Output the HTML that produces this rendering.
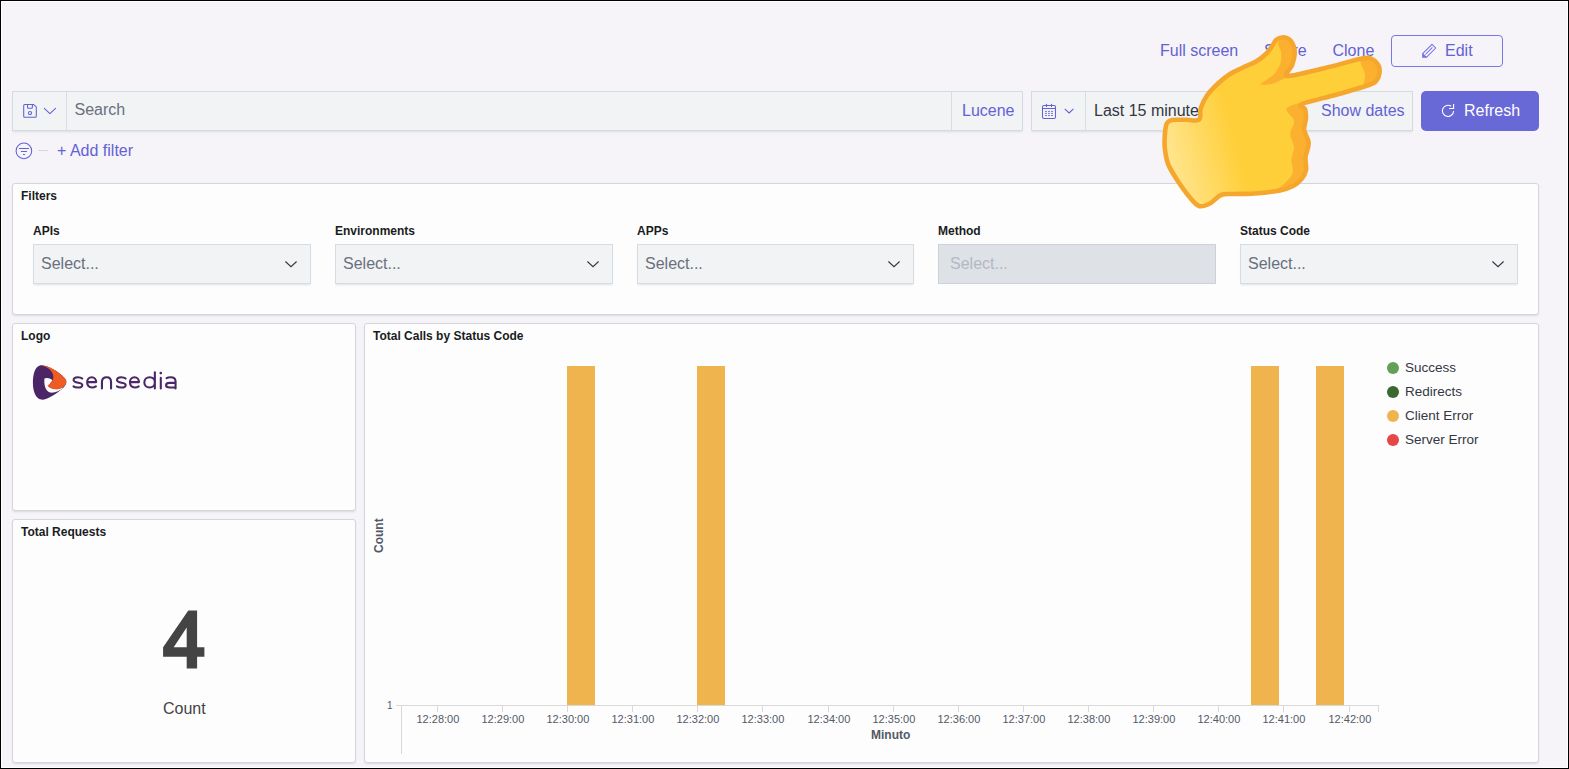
<!DOCTYPE html>
<html><head><meta charset="utf-8">
<style>
html,body{margin:0;padding:0;}
body{width:1569px;height:769px;overflow:hidden;position:relative;background:#000;font-family:"Liberation Sans",sans-serif;}
#frame{position:absolute;left:1px;top:1px;width:1567px;height:767px;background:#fff;}
#page{position:absolute;left:2px;top:2px;width:1565px;height:765px;background:#f6f4f8;}
.a{position:absolute;}
.t{position:absolute;line-height:normal;white-space:nowrap;}
.lnk{color:#6262d4;font-size:16px;}
.field{position:absolute;background:#f1f3f5;box-shadow:inset 0 0 0 1px #d3dce1,0 2px 2px -1px rgba(152,162,179,.3);}
.panel{position:absolute;background:#fdfdfe;border:1px solid #d3d7dc;border-radius:3px;box-shadow:0 1px 2px rgba(0,0,0,.07),0 2px 3px -1px rgba(0,0,0,.05);box-sizing:border-box;}
.ptitle{font-weight:bold;font-size:12px;color:#1a1c21;}
.lbl{font-weight:bold;font-size:12px;color:#1a1c21;}
.sel{position:absolute;top:244px;height:40px;width:278px;background:#f2f3f5;box-shadow:inset 0 0 0 1px #d5dde2,0 2px 2px -1px rgba(152,162,179,.3);box-sizing:border-box;}
.sel .ph{position:absolute;left:8px;top:11px;font-size:16px;color:#69707d;line-height:normal;}
.sel svg{position:absolute;right:13px;top:16px;}
.tick{font-size:11px;color:#535966;}
.leg{font-size:13.5px;color:#343741;}
.dot{position:absolute;width:12px;height:12px;border-radius:50%;}
.bar{position:absolute;background:#efb44d;}
</style></head>
<body>
<div id="frame"></div>
<div id="page"></div>

<!-- top nav -->
<div class="t lnk" style="left:1160px;top:42px;">Full screen</div>
<div class="t lnk" style="left:1264px;top:42px;">Share</div>
<div class="t lnk" style="left:1332.5px;top:42px;">Clone</div>
<div class="a" style="left:1391px;top:35px;width:112px;height:32px;box-sizing:border-box;border:1px solid #7777e6;border-radius:4px;"></div>
<div class="t lnk" style="left:1445px;top:42px;">Edit</div>

<!-- search bar -->
<div class="field" style="left:12px;top:91px;width:1011px;height:40px;"></div>
<div class="a" style="left:66px;top:92px;width:1px;height:38px;background:#d6dee3;"></div>
<div class="a" style="left:951px;top:92px;width:1px;height:38px;background:#d6dee3;"></div>
<div class="t" style="left:74.5px;top:101px;font-size:16px;color:#69707d;">Search</div>
<div class="t lnk" style="left:962px;top:102px;">Lucene</div>

<!-- date picker -->
<div class="field" style="left:1031px;top:91px;width:382px;height:40px;"></div>
<div class="a" style="left:1085px;top:92px;width:1px;height:38px;background:#d6dee3;"></div>
<div class="t" style="left:1094px;top:102px;font-size:16px;color:#343741;">Last 15 minutes</div>
<div class="t lnk" style="left:1321px;top:102px;">Show dates</div>

<!-- refresh -->
<div class="a" style="left:1421px;top:91px;width:118px;height:40px;background:#6868d6;border-radius:5px;"></div>
<div class="t" style="left:1464px;top:102px;font-size:16px;color:#fff;">Refresh</div>

<!-- add filter row -->
<div class="t lnk" style="left:57px;top:142px;">+ Add filter</div>

<!-- Filters panel -->
<div class="panel" style="left:12px;top:183px;width:1527px;height:132px;"></div>
<div class="t ptitle" style="left:21px;top:189px;">Filters</div>
<div class="t lbl" style="left:33px;top:224px;">APIs</div>
<div class="t lbl" style="left:335px;top:224px;">Environments</div>
<div class="t lbl" style="left:637px;top:224px;">APPs</div>
<div class="t lbl" style="left:938px;top:224px;">Method</div>
<div class="t lbl" style="left:1240px;top:224px;">Status Code</div>
<div class="sel" style="left:33px;"><div class="ph">Select...</div><svg width="14" height="9" viewBox="0 0 14 9"><path d="M1.4 1.5L7 6.7L12.6 1.5" fill="none" stroke="#343741" stroke-width="1.15"/></svg></div>
<div class="sel" style="left:335px;"><div class="ph">Select...</div><svg width="14" height="9" viewBox="0 0 14 9"><path d="M1.4 1.5L7 6.7L12.6 1.5" fill="none" stroke="#343741" stroke-width="1.15"/></svg></div>
<div class="sel" style="left:637px;width:277px;"><div class="ph">Select...</div><svg width="14" height="9" viewBox="0 0 14 9"><path d="M1.4 1.5L7 6.7L12.6 1.5" fill="none" stroke="#343741" stroke-width="1.15"/></svg></div>
<div class="sel" style="left:938px;background:#dee1e5;box-shadow:inset 0 0 0 1px #cad2d8;"><div class="ph" style="left:12px;color:#b3b9c1;">Select...</div></div>
<div class="sel" style="left:1240px;"><div class="ph">Select...</div><svg width="14" height="9" viewBox="0 0 14 9"><path d="M1.4 1.5L7 6.7L12.6 1.5" fill="none" stroke="#343741" stroke-width="1.15"/></svg></div>

<!-- Logo panel -->
<div class="panel" style="left:12px;top:323px;width:344px;height:188px;"></div>
<div class="t ptitle" style="left:21px;top:329px;">Logo</div>
<svg class="a" style="left:0;top:0;" width="200" height="420" viewBox="0 0 200 420">
<path d="M39.4 365.7C35 367.2 32.9 374 32.9 383C33 392 35.8 398.3 41.2 399.6C46 400.4 56 394.5 63.5 387.5C66.2 385 67 382 65.8 379.5C62 374 52 367 42.9 365.4C41.6 365.2 40.4 365.3 39.4 365.7Z" fill="#4b2566"/>
<path d="M44.4 378.6C46.5 377.6 50 378 52.5 380.2L48.2 386.2C51 389 56.5 390 63.2 387.6C60 391.2 55 393 50.2 392.6C46.3 391.7 43.8 386.5 44.4 378.6Z" fill="#fdfdff"/>
<path d="M41.3 365.3C48 365.5 58.5 371 65.6 379.3C67 381.2 66.6 384.3 62.8 387.6C58.5 390.2 52 390.4 47.5 385.6C51.2 383.2 53.6 380 53.3 376.5C53 371.2 48.2 367.2 41.3 365.3Z" fill="#ef5b22"/>
<g fill="none" stroke="#4a2766" stroke-width="2.1" stroke-linecap="round" stroke-linejoin="round">
<path transform="translate(0 0)" d="M82.2 378.6C81.2 377.6 79.6 377.25 77.9 377.25C75.2 377.25 73.6 378.4 73.6 380C73.6 383.8 82.3 381.6 82.3 384.9C82.3 386.6 80.6 387.45 77.9 387.45C75.9 387.45 74.4 387 73.5 386.3"/><path transform="translate(0 0)" d="M87.2 382.1H96.2C96.2 379.3 94.3 377.25 91.7 377.25C89 377.25 87.15 379.5 87.15 382.35C87.15 385.3 89 387.45 91.9 387.45C93.5 387.45 94.9 387.1 95.9 386.4"/>
<path d="M101.95 388.4V382C101.95 379 104 377.25 106.7 377.25C109.5 377.25 111.05 379 111.05 382V388.4"/>
<path transform="translate(43.4 0)" d="M82.2 378.6C81.2 377.6 79.6 377.25 77.9 377.25C75.2 377.25 73.6 378.4 73.6 380C73.6 383.8 82.3 381.6 82.3 384.9C82.3 386.6 80.6 387.45 77.9 387.45C75.9 387.45 74.4 387 73.5 386.3"/><path transform="translate(42.8 0)" d="M87.2 382.1H96.2C96.2 379.3 94.3 377.25 91.7 377.25C89 377.25 87.15 379.5 87.15 382.35C87.15 385.3 89 387.45 91.9 387.45C93.5 387.45 94.9 387.1 95.9 386.4"/>
<path d="M154.85 372.3V388.4M154.85 382.4C154.85 379.2 152.6 377.25 149.6 377.25C146.5 377.25 144.35 379.6 144.35 382.4C144.35 385.3 146.5 387.45 149.6 387.45C152.6 387.45 154.85 385.4 154.85 382.4"/>
<path d="M160.8 377.8V388.4"/>
<path d="M166.6 378.2C167.6 377.5 169 377.25 170.6 377.25C174 377.25 175.55 378.8 175.55 381.4V388.4M175.55 382.9H170C167.4 382.9 166.05 384.2 166.05 385.3C166.05 386.8 167.3 387.45 169.6 387.45H175.55"/>
</g>
<circle cx="160.8" cy="373.1" r="1.35" fill="#4a2766"/>
</svg>

<!-- Total Requests panel -->
<div class="panel" style="left:12px;top:519px;width:344px;height:244px;"></div>
<div class="t ptitle" style="left:21px;top:525px;">Total Requests</div>
<svg class="a" style="left:0;top:0;" width="260" height="700" viewBox="0 0 260 700"><path fill-rule="evenodd" fill="#444" d="M188.3 610.4H197.1V647.3H204.4V656.7H197.1V668.6H186.7V656.7H163.1V647.3ZM186.7 627.6L173.7 647.3H186.7Z"/></svg>
<div class="t" style="left:163px;top:700px;font-size:16px;color:#444;">Count</div>

<!-- Chart panel -->
<div class="panel" style="left:364px;top:323px;width:1175px;height:440px;"></div>
<div class="t ptitle" style="left:373px;top:329px;">Total Calls by Status Code</div>

<div class="bar" style="left:567px;top:366px;width:28px;height:339px;"></div>
<div class="bar" style="left:697px;top:366px;width:28px;height:339px;"></div>
<div class="bar" style="left:1251px;top:366px;width:28px;height:339px;"></div>
<div class="bar" style="left:1316px;top:366px;width:28px;height:339px;"></div>

<div class="a" style="left:396px;top:705px;width:983px;height:1px;background:#d9d9d9;"></div>
<div class="a" style="left:401px;top:705px;width:1px;height:49px;background:#d9d9d9;"></div>
<div class="a" style="left:437px;top:705px;width:1px;height:7px;background:#d9d9d9;"></div><div class="t tick" style="left:416.5px;top:713px;width:42px;text-align:center;">12:28:00</div>
<div class="a" style="left:502px;top:705px;width:1px;height:7px;background:#d9d9d9;"></div><div class="t tick" style="left:481.5px;top:713px;width:42px;text-align:center;">12:29:00</div>
<div class="a" style="left:567px;top:705px;width:1px;height:7px;background:#d9d9d9;"></div><div class="t tick" style="left:546.5px;top:713px;width:42px;text-align:center;">12:30:00</div>
<div class="a" style="left:632px;top:705px;width:1px;height:7px;background:#d9d9d9;"></div><div class="t tick" style="left:611.5px;top:713px;width:42px;text-align:center;">12:31:00</div>
<div class="a" style="left:697px;top:705px;width:1px;height:7px;background:#d9d9d9;"></div><div class="t tick" style="left:676.5px;top:713px;width:42px;text-align:center;">12:32:00</div>
<div class="a" style="left:762px;top:705px;width:1px;height:7px;background:#d9d9d9;"></div><div class="t tick" style="left:741.5px;top:713px;width:42px;text-align:center;">12:33:00</div>
<div class="a" style="left:828px;top:705px;width:1px;height:7px;background:#d9d9d9;"></div><div class="t tick" style="left:807.5px;top:713px;width:42px;text-align:center;">12:34:00</div>
<div class="a" style="left:893px;top:705px;width:1px;height:7px;background:#d9d9d9;"></div><div class="t tick" style="left:872.5px;top:713px;width:42px;text-align:center;">12:35:00</div>
<div class="a" style="left:958px;top:705px;width:1px;height:7px;background:#d9d9d9;"></div><div class="t tick" style="left:937.5px;top:713px;width:42px;text-align:center;">12:36:00</div>
<div class="a" style="left:1023px;top:705px;width:1px;height:7px;background:#d9d9d9;"></div><div class="t tick" style="left:1002.5px;top:713px;width:42px;text-align:center;">12:37:00</div>
<div class="a" style="left:1088px;top:705px;width:1px;height:7px;background:#d9d9d9;"></div><div class="t tick" style="left:1067.5px;top:713px;width:42px;text-align:center;">12:38:00</div>
<div class="a" style="left:1153px;top:705px;width:1px;height:7px;background:#d9d9d9;"></div><div class="t tick" style="left:1132.5px;top:713px;width:42px;text-align:center;">12:39:00</div>
<div class="a" style="left:1218px;top:705px;width:1px;height:7px;background:#d9d9d9;"></div><div class="t tick" style="left:1197.5px;top:713px;width:42px;text-align:center;">12:40:00</div>
<div class="a" style="left:1283px;top:705px;width:1px;height:7px;background:#d9d9d9;"></div><div class="t tick" style="left:1262.5px;top:713px;width:42px;text-align:center;">12:41:00</div>
<div class="a" style="left:1349px;top:705px;width:1px;height:7px;background:#d9d9d9;"></div><div class="t tick" style="left:1328.5px;top:713px;width:42px;text-align:center;">12:42:00</div>
<div class="a" style="left:1378px;top:705px;width:1px;height:7px;background:#d9d9d9;"></div>
<div class="t" style="left:387px;top:700px;font-size:10px;color:#535966;">1</div>
<div class="t" style="left:372px;top:553px;font-size:12px;font-weight:bold;color:#535966;transform:rotate(-90deg);transform-origin:0 0;">Count</div>
<div class="t" style="left:871px;top:728px;font-size:12px;font-weight:bold;color:#535966;">Minuto</div>

<div class="dot" style="left:1387px;top:362px;background:#62a055;"></div>
<div class="t leg" style="left:1405px;top:360px;">Success</div>
<div class="dot" style="left:1387px;top:386px;background:#39692f;"></div>
<div class="t leg" style="left:1405px;top:384px;">Redirects</div>
<div class="dot" style="left:1387px;top:410px;background:#efb44d;"></div>
<div class="t leg" style="left:1405px;top:408px;">Client Error</div>
<div class="dot" style="left:1387px;top:434px;background:#e64646;"></div>
<div class="t leg" style="left:1405px;top:432px;">Server Error</div>

<!-- ICONS -->
<svg class="a" style="left:0;top:0;" width="1569" height="769" viewBox="0 0 1569 769">
<g fill="none" stroke="#6262d4" stroke-width="1.05" stroke-linejoin="round" stroke-linecap="round">
<path d="M23.7 105.4a1 1 0 0 1 1-1H33.4L36.3 106.9V116.3a1 1 0 0 1-1 1H24.7a1 1 0 0 1-1-1z"/>
<path d="M27.5 104.4V107.3a1 1 0 0 0 1 1H31.4a1 1 0 0 0 1-1V104.4"/>
<circle cx="30" cy="113" r="1.6"/>
<path d="M44.3 108.3L49.9 113.6L55.6 108.3"/>
<rect x="1042.5" y="105.5" width="13" height="13" rx="1.5"/>
<path d="M1042.5 108.5H1055.5M1046.5 104.2V106.5M1051.5 104.2V106.5"/>
<path d="M1045.1 111.4h1.8M1048.1 111.4h1.8M1051.1 111.4h1.8M1045.1 113.4h1.8M1048.1 113.4h1.8M1051.1 113.4h1.8M1045.1 115.5h1.8M1048.1 115.5h1.8M1051.1 115.5h1.8" stroke-width="0.95" stroke-linecap="butt"/>
<path d="M1065 109.2L1069.1 113L1073.2 109.2"/>
<circle cx="23.9" cy="150.9" r="7.8"/>
<path d="M19.5 148.4H28.6M21.4 151.4H26.6M23.4 154.4H24.6"/>
</g>
<g fill="none" stroke="#6e6ee6" stroke-width="1.05" stroke-linejoin="round">
<path d="M1422.6 53.6L1432 44.3L1435.7 48L1426.4 57.3Z"/>
<path d="M1432.4 47.4L1425.4 54.5"/>
</g>
<path d="M1422.2 53.4V57.7H1426.6Z" fill="#6e6ee6"/>
<g fill="none" stroke="#fff" stroke-width="1.1">
<path d="M1451.3 106.3A5.6 5.6 0 1 0 1453.6 111"/>
<path d="M1453.6 104V108.5H1449.1"/>
</g>
<rect x="38" y="150" width="10" height="1" fill="#d3d9df"/>
</svg>
<!-- HAND -->
<svg class="a" style="left:1150px;top:30px;" width="250" height="185" viewBox="1150 30 250 185">
<defs><linearGradient id="hg" x1="1165" y1="180" x2="1240" y2="160" gradientUnits="userSpaceOnUse"><stop offset="0" stop-color="#ffe899"/><stop offset="1" stop-color="#ffcf3a"/></linearGradient></defs>
<path d="M1284.0 37.2C1286.2 37.3 1288.4 38.5 1290.0 40.0C1291.6 41.5 1293.0 44.0 1293.8 46.5C1294.6 49.0 1294.9 51.8 1294.6 55.0C1294.3 58.2 1293.2 62.0 1292.0 65.5C1290.8 69.0 1282.0 75.6 1287.5 76.0C1293.0 76.4 1312.6 70.9 1325.0 68.0C1337.4 65.1 1354.2 60.0 1362.0 58.5C1369.8 57.0 1369.2 57.8 1372.0 59.0C1374.8 60.2 1377.2 63.2 1378.5 65.5C1379.8 67.8 1379.8 70.5 1379.5 73.0C1379.2 75.5 1378.2 78.5 1376.5 80.5C1374.8 82.5 1375.6 82.7 1369.0 85.0C1362.4 87.3 1348.2 91.3 1337.0 94.5C1325.8 97.7 1307.3 101.6 1302.0 104.0C1296.7 106.4 1304.3 106.7 1305.0 109.0C1305.7 111.3 1306.1 114.5 1306.0 118.0C1305.9 121.5 1303.8 125.8 1304.2 130.0C1304.7 134.2 1308.5 138.5 1308.7 143.0C1308.9 147.5 1306.0 152.5 1305.5 157.0C1305.0 161.5 1306.7 166.3 1306.0 170.0C1305.3 173.7 1303.7 176.3 1301.5 179.0C1299.3 181.7 1296.6 184.1 1293.0 186.0C1289.4 187.9 1286.4 189.2 1280.0 190.5C1273.6 191.8 1262.2 192.9 1254.5 193.5C1246.8 194.1 1239.1 193.8 1233.5 194.0C1227.9 194.2 1224.9 193.4 1221.0 195.0C1217.1 196.6 1213.7 201.7 1210.0 203.5C1206.3 205.3 1202.4 207.1 1199.0 206.0C1195.6 204.9 1192.9 201.0 1189.5 197.0C1186.1 193.0 1182.0 187.3 1178.5 182.0C1175.0 176.7 1170.8 170.5 1168.5 165.0C1166.2 159.5 1165.5 154.2 1164.9 149.0C1164.3 143.8 1164.6 138.2 1164.9 134.0C1165.2 129.8 1165.6 125.8 1166.8 123.5C1168.0 121.2 1168.8 120.6 1172.0 120.0C1175.2 119.4 1181.5 119.9 1186.0 119.8C1190.5 119.7 1196.5 121.6 1199.0 119.6C1201.5 117.6 1199.5 112.0 1200.8 108.0C1202.1 104.0 1204.1 99.6 1207.0 95.5C1209.9 91.4 1214.2 87.1 1218.0 83.5C1221.8 79.9 1225.8 76.7 1230.0 74.0C1234.2 71.3 1238.7 69.6 1243.0 67.5C1247.3 65.4 1252.1 63.8 1256.0 61.5C1259.9 59.2 1263.8 56.2 1266.5 53.5C1269.2 50.8 1270.8 47.8 1272.5 45.5C1274.2 43.2 1274.6 40.9 1276.5 39.5C1278.4 38.1 1281.8 37.1 1284.0 37.2Z" fill="url(#hg)"/>
<path d="M1284.0 37.2C1286.0 36.7 1288.4 38.5 1290.0 40.0C1291.6 41.5 1293.0 44.0 1293.8 46.5C1294.6 49.0 1294.9 51.8 1294.6 55.0C1294.3 58.2 1293.2 62.0 1292.0 65.5C1290.8 69.0 1290.7 73.0 1287.5 76.0C1284.3 79.0 1277.5 82.1 1273.0 83.5C1268.5 84.9 1261.5 85.2 1260.5 84.5C1259.5 83.8 1264.6 81.4 1267.0 79.5C1269.4 77.6 1272.8 75.8 1275.0 73.0C1277.2 70.2 1279.5 66.5 1280.5 63.0C1281.5 59.5 1281.4 55.3 1281.0 52.0C1280.6 48.7 1277.5 45.5 1278.0 43.0C1278.5 40.5 1282.0 37.7 1284.0 37.2Z" fill="#fbb12f"/>
<path d="M1362.0 58.5C1363.8 57.7 1369.2 57.8 1372.0 59.0C1374.8 60.2 1377.2 63.2 1378.5 65.5C1379.8 67.8 1379.8 70.5 1379.5 73.0C1379.2 75.5 1378.2 78.5 1376.5 80.5C1374.8 82.5 1371.1 84.4 1369.0 85.0C1366.9 85.6 1364.7 85.8 1364.0 84.0C1363.3 82.2 1365.5 77.3 1365.0 74.0C1364.5 70.7 1361.5 66.6 1361.0 64.0C1360.5 61.4 1360.2 59.3 1362.0 58.5Z" fill="#fbb12f"/>
<path d="M1302.0 104.0C1303.5 104.8 1304.3 106.7 1305.0 109.0C1305.7 111.3 1306.1 114.5 1306.0 118.0C1305.9 121.5 1303.8 125.8 1304.2 130.0C1304.7 134.2 1308.5 138.5 1308.7 143.0C1308.9 147.5 1306.0 152.5 1305.5 157.0C1305.0 161.5 1306.7 166.3 1306.0 170.0C1305.3 173.7 1303.7 176.3 1301.5 179.0C1299.3 181.7 1296.6 184.1 1293.0 186.0C1289.4 187.9 1283.1 189.6 1280.0 190.5C1276.9 191.4 1273.7 192.8 1274.5 191.5C1275.3 190.2 1282.0 186.1 1285.0 183.0C1288.0 179.9 1291.6 176.8 1292.7 173.0C1293.8 169.2 1291.2 164.3 1291.4 160.0C1291.6 155.7 1294.2 151.3 1294.0 147.0C1293.8 142.7 1290.1 138.3 1290.1 134.0C1290.1 129.7 1294.7 125.1 1294.0 121.0C1293.3 116.9 1285.9 112.1 1286.2 109.3C1286.5 106.5 1293.4 104.9 1296.0 104.0C1298.6 103.1 1300.5 103.2 1302.0 104.0Z" fill="#fbb12f"/>
<path d="M1284.0 37.2C1286.2 37.3 1288.4 38.5 1290.0 40.0C1291.6 41.5 1293.0 44.0 1293.8 46.5C1294.6 49.0 1294.9 51.8 1294.6 55.0C1294.3 58.2 1293.2 62.0 1292.0 65.5C1290.8 69.0 1282.0 75.6 1287.5 76.0C1293.0 76.4 1312.6 70.9 1325.0 68.0C1337.4 65.1 1354.2 60.0 1362.0 58.5C1369.8 57.0 1369.2 57.8 1372.0 59.0C1374.8 60.2 1377.2 63.2 1378.5 65.5C1379.8 67.8 1379.8 70.5 1379.5 73.0C1379.2 75.5 1378.2 78.5 1376.5 80.5C1374.8 82.5 1375.6 82.7 1369.0 85.0C1362.4 87.3 1348.2 91.3 1337.0 94.5C1325.8 97.7 1307.3 101.6 1302.0 104.0C1296.7 106.4 1304.3 106.7 1305.0 109.0C1305.7 111.3 1306.1 114.5 1306.0 118.0C1305.9 121.5 1303.8 125.8 1304.2 130.0C1304.7 134.2 1308.5 138.5 1308.7 143.0C1308.9 147.5 1306.0 152.5 1305.5 157.0C1305.0 161.5 1306.7 166.3 1306.0 170.0C1305.3 173.7 1303.7 176.3 1301.5 179.0C1299.3 181.7 1296.6 184.1 1293.0 186.0C1289.4 187.9 1286.4 189.2 1280.0 190.5C1273.6 191.8 1262.2 192.9 1254.5 193.5C1246.8 194.1 1239.1 193.8 1233.5 194.0C1227.9 194.2 1224.9 193.4 1221.0 195.0C1217.1 196.6 1213.7 201.7 1210.0 203.5C1206.3 205.3 1202.4 207.1 1199.0 206.0C1195.6 204.9 1192.9 201.0 1189.5 197.0C1186.1 193.0 1182.0 187.3 1178.5 182.0C1175.0 176.7 1170.8 170.5 1168.5 165.0C1166.2 159.5 1165.5 154.2 1164.9 149.0C1164.3 143.8 1164.6 138.2 1164.9 134.0C1165.2 129.8 1165.6 125.8 1166.8 123.5C1168.0 121.2 1168.8 120.6 1172.0 120.0C1175.2 119.4 1181.5 119.9 1186.0 119.8C1190.5 119.7 1196.5 121.6 1199.0 119.6C1201.5 117.6 1199.5 112.0 1200.8 108.0C1202.1 104.0 1204.1 99.6 1207.0 95.5C1209.9 91.4 1214.2 87.1 1218.0 83.5C1221.8 79.9 1225.8 76.7 1230.0 74.0C1234.2 71.3 1238.7 69.6 1243.0 67.5C1247.3 65.4 1252.1 63.8 1256.0 61.5C1259.9 59.2 1263.8 56.2 1266.5 53.5C1269.2 50.8 1270.8 47.8 1272.5 45.5C1274.2 43.2 1274.6 40.9 1276.5 39.5C1278.4 38.1 1281.8 37.1 1284.0 37.2Z" fill="none" stroke="#f5a62c" stroke-width="4.6" stroke-linejoin="round"/>
</svg>
</body></html>
